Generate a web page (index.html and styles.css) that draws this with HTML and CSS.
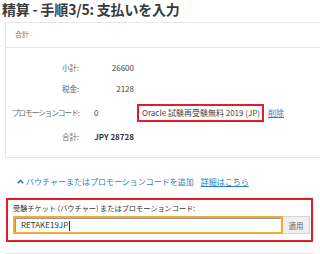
FILE: index.html
```
<!DOCTYPE html>
<html lang="ja">
<head>
    <meta charset="UTF-8">
    <title>精算 - 手順3/5: 支払いを入力</title>
    <link rel="stylesheet" href="styles.css">
</head>
<body>
    <h1>精算 - 手順3/5: 支払いを入力</h1>
    <div class="panel">
        <div class="panel-head">合計</div>
        <div class="panel-body">
            <div class="row">
                <span class="label">小計:</span>
                <span class="value">26600</span>
            </div>
            <div class="row">
                <span class="label">税金:</span>
                <span class="value">2128</span>
            </div>
            <div class="row promo-row">
                <span class="label narrow">プロモーションコード:</span>
                <span class="value zero">0</span>
                <span class="promo-name">Oracle 試験再受験無料 2019 (JP)</span>
                <a class="link" href="#">削除</a>
            </div>
            <div class="row">
                <span class="label">合計:</span>
                <span class="value total">JPY 28728</span>
            </div>
        </div>
    </div>
    <div class="voucher">
        <div class="toggle">
            <svg class="chevron" width="7" height="5" viewBox="0 0 7 5"><path d="M0.8 4.2 L3.5 1.5 L6.2 4.2" fill="none" stroke="#2a7fc0" stroke-width="1.6"/></svg>
            <a class="plain-link" href="#">バウチャーまたはプロモーションコードを追加</a>
            <a class="link" href="#">詳細はこちら</a>
        </div>
        <div class="voucher-form">
            <div class="form-label">受験チケット (バウチャー) またはプロモーションコード:</div>
            <div class="input-group">
                <div class="code-input">RETAKE19JP<span class="caret"></span></div>
                <button class="apply">適用</button>
            </div>
        </div>
    </div>
</body>
</html>
```
FILE: styles.css
```
body {
    margin: 0;
    width: 320px;
    height: 254px;
    overflow: hidden;
    background-color: #ffffff;
    font-family: "Noto Sans CJK JP", "Noto Sans", sans-serif;
    color: #333;
}

h1 {
    margin: 0;
    padding-left: 2px;
    height: 22px;
    font-size: 14px;
    line-height: 18px;
    font-weight: bold;
    color: #3a3a3a;
    white-space: nowrap;
    letter-spacing: -0.2px;
}

.panel {
    margin-left: 5px;
    border: 1px solid #e6e6e6;
    border-right: none;
}

.panel-head {
    height: 24px;
    padding-left: 9px;
    font-size: 7px;
    line-height: 22px;
    color: #777;
    border-bottom: 1px solid #e6e6e6;
}

.panel-body {
    padding: 9px 0 10px;
}

.row {
    display: flex;
    align-items: center;
    height: 21px;
    font-size: 8px;
    color: #555;
}

.promo-row {
    height: 27px;
}

.label {
    width: 73px;
    text-align: right;
    font-size: 7.5px;
    color: #666;
    white-space: nowrap;
}

.label.narrow {
    letter-spacing: -0.9px;
}

.value {
    width: 55px;
    text-align: right;
    color: #444;
}

.value.zero {
    width: 43px;
    margin-left: 15px;
    text-align: left;
}

.value.total {
    font-weight: bold;
    color: #333;
}

.promo-name {
    height: 14px;
    line-height: 14px;
    padding: 0 2px 0 3px;
    border: 2px solid #e11f2a;
    color: #444;
    white-space: nowrap;
}

.link {
    margin-left: 4px;
    color: #2a7fc0;
    text-decoration: underline;
}

.voucher {
    width: 308px;
    margin-left: 5px;
    height: 95px;
    border-bottom: 1px solid #e6e6e6;
}

.toggle {
    display: flex;
    align-items: center;
    height: 12px;
    padding: 17px 0 0 12px;
    font-size: 8px;
    color: #2a7fc0;
}

.chevron {
    margin-right: 2px;
}

.plain-link {
    color: #2a7fc0;
    text-decoration: none;
}

.toggle .link {
    margin-left: 7px;
}

.voucher-form {
    margin-top: 11px;
    margin-left: 1px;
    height: 40px;
    padding: 0 1px 0 5px;
    border: 2px solid #e11f2a;
}

.form-label {
    height: 16px;
    line-height: 16px;
    font-size: 7.2px;
    color: #333;
}

.input-group {
    display: flex;
    height: 18px;
}

.code-input {
    flex: 1;
    box-sizing: border-box;
    padding-left: 6px;
    font-size: 8px;
    line-height: 14px;
    color: #333;
    border: 2px solid #f0ac33;
    box-shadow: inset 1px 1px 0 #999;
}

.caret {
    display: inline-block;
    width: 1px;
    height: 10px;
    margin-left: 1px;
    vertical-align: middle;
    background-color: #333;
}

.apply {
    width: 27px;
    padding: 0;
    font-family: "Noto Sans CJK JP", sans-serif;
    font-size: 7.5px;
    color: #666;
    background-color: #efefef;
    border: 1px solid #d4d4d4;
    border-left: none;
}
```
